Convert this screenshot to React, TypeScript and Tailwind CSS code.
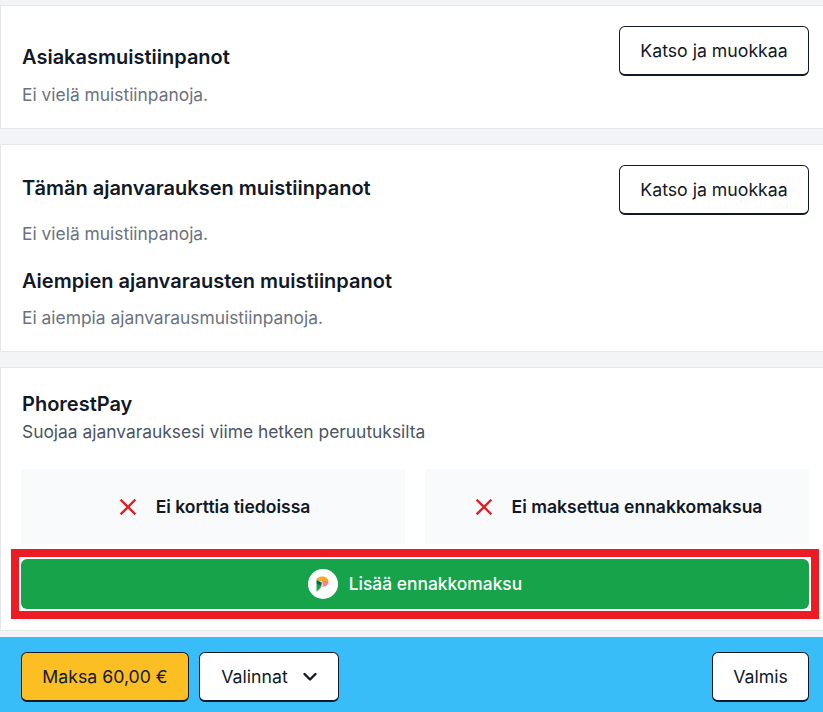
import React from 'react';

const FONT = { fontFamily: 'Inter, "Liberation Sans", sans-serif' };

const OutlineButton: React.FC<{ label: string; className?: string }> = ({ label, className = '' }) => (
  <button className={`h-[50px] rounded-md border border-b-2 border-[#111827] bg-white text-[17.7px] leading-[28px] text-[#111827] ${className}`}>
    {label}
  </button>
);

const Gap: React.FC<{ className: string }> = ({ className }) => <div className={`bg-[#f3f4f6] ${className}`} />;

const Status: React.FC<{ label: string }> = ({ label }) => (
  <div className="flex h-[75px] items-center justify-center gap-[20px] bg-[#f9fafb] pl-1">
    <svg width="16" height="16" viewBox="0 0 16 16" fill="none" stroke="#e31e26" strokeWidth="2.4" strokeLinecap="square">
      <path d="M1.5 1.5 14.5 14.5M14.5 1.5 1.5 14.5" />
    </svg>
    <span className="text-[17.55px] font-semibold leading-6 text-[#111827]">{label}</span>
  </div>
);

const PhorestLogo = () => (
  <span className="flex h-[30px] w-[30px] items-center justify-center rounded-full bg-white">
    <svg width="13" height="16" viewBox="0 0 13 16">
      <path d="M1 2.500C2.500.8 5 .2 7.500.5 10 .9 12 2.500 12.500 5L6 5.500 1 4Z" fill="#f9a825" />
      <path d="M6 5 12.500 5C12.800 8 10.500 10.500 7 10.800Z" fill="#f2858c" />
      <path d="M6 5.500 7 10.800 5 11.500Z" fill="#f7c6c0" />
      <path d="M.5 3.500 6 6.500 4.500 12 .8 15.500.5 15.500Z" fill="#1aa64f" />
      <path d="M.8 4.500 5.500 7 4.800 10 .8 7.500Z" fill="#15604a" />
    </svg>
  </span>
);

export default function App() {
  return (
    <div style={FONT} className="flex h-[712px] w-[823px] flex-col overflow-hidden bg-[#f3f4f6]">
      <Gap className="h-[5px] shrink-0" />

      <section className="flex h-[124px] shrink-0 justify-between border-y border-l border-[#e5e7eb] bg-white pl-[21px] pr-[14px] pt-5">
        <div>
          <h2 className="mt-[17px] text-[20px] font-semibold leading-7 text-[#111827]">Asiakasmuistiinpanot</h2>
          <p className="mt-[12px] text-[17.4px] leading-6 text-[#6b7280]">Ei vielä muistiinpanoja.</p>
        </div>
        <OutlineButton label="Katso ja muokkaa" className="w-[190px]" />
      </section>

      <Gap className="h-[15px] shrink-0" />

      <section className="flex h-[208px] shrink-0 justify-between border-y border-l border-[#e5e7eb] bg-white pl-[21px] pr-[14px] pt-5">
        <div>
          <h2 className="mt-[9px] text-[20px] font-semibold leading-7 text-[#111827]">Tämän ajanvarauksen muistiinpanot</h2>
          <p className="mt-[20px] text-[17.4px] leading-6 text-[#6b7280]">Ei vielä muistiinpanoja.</p>
          <h2 className="mt-[21px] text-[20px] font-semibold leading-7 text-[#111827]">Aiempien ajanvarausten muistiinpanot</h2>
          <p className="mt-[11px] text-[17.4px] leading-6 text-[#6b7280]">Ei aiempia ajanvarausmuistiinpanoja.</p>
        </div>
        <OutlineButton label="Katso ja muokkaa" className="w-[190px]" />
      </section>

      <Gap className="h-[15px] shrink-0" />

      <section className="h-[264px] shrink-0 border-y border-l border-[#e5e7eb] bg-white">
        <div className="pl-[20px] pr-[14px] pt-[22px]">
          <h2 className="pl-px text-[20px] font-semibold leading-7 text-[#111827]">PhorestPay</h2>
          <p className="mt-[2px] pl-px text-[17.4px] leading-6 text-[#4b5563]">Suojaa ajanvarauksesi viime hetken peruutuksilta</p>
          <div className="mt-[25px] grid grid-cols-2 gap-5">
            <Status label="Ei korttia tiedoissa" />
            <Status label="Ei maksettua ennakkomaksua" />
          </div>
        </div>
        {/* red highlight from the original screenshot */}
        <div className="ml-[10px] mr-[4px] mt-[5px] border-8 border-[#ed1c24] bg-white p-[2px]">
          <button className="flex h-[50px] w-full items-center justify-center gap-[11px] rounded-md bg-[#16a34a] text-[17.4px] font-medium text-white">
            <PhorestLogo />
            Lisää ennakkomaksu
          </button>
        </div>
      </section>

      <Gap className="h-[6px] shrink-0" />

      <footer className="flex h-[75px] shrink-0 items-start justify-between bg-[#38bdf8] pl-[21px] pr-[14px] pt-[15px]">
        <div className="flex gap-[10px]">
          <button className="h-[50px] w-[168px] rounded-md border border-b-2 border-[#111827] bg-[#fbbf24] text-[17.7px] leading-[28px] text-[#111827]">
            Maksa 60,00 €
          </button>
          <button className="flex h-[50px] w-[140px] items-center justify-center gap-[15px] rounded-md border border-b-2 border-[#111827] bg-white text-[17.7px] leading-[28px] text-[#111827]">
            Valinnat
            <svg width="14" height="10" viewBox="0 0 14 10" fill="none" stroke="#111827" strokeWidth="2.400" strokeLinecap="round" strokeLinejoin="round">
              <path d="M1.500 2 7 7.500 12.500 2" />
            </svg>
          </button>
        </div>
        <OutlineButton label="Valmis" className="w-[97px]" />
      </footer>
    </div>
  );
}
